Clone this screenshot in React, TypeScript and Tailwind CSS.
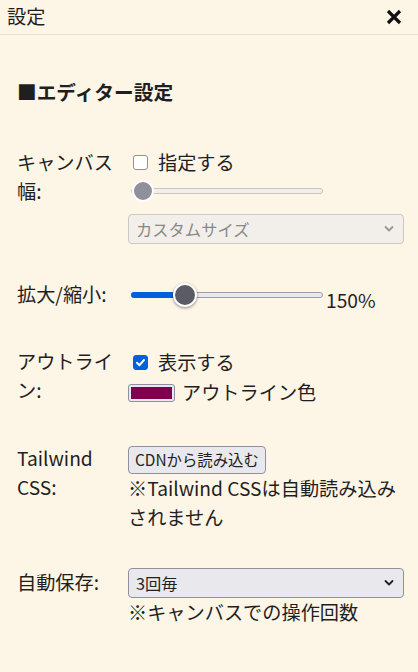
import React, { useState } from "react";

const Chevron = ({ color }: { color: string }) => (
  <svg
    width="10"
    height="7"
    viewBox="0 0 10 7"
    className="pointer-events-none absolute right-[10px] top-1/2 -translate-y-1/2"
  >
    <path d="M1.5 1.5 L5 5 L8.5 1.5" fill="none" stroke={color} strokeWidth="1.8" strokeLinecap="round" strokeLinejoin="round" />
  </svg>
);

const Slider = ({ pct, disabled }: { pct: number; disabled?: boolean }) => (
  <div className="relative flex h-[24px] w-[192px] items-center">
    <div
      className={`h-[6px] w-full rounded-full border ${disabled ? "border-[#c9c5c0] bg-[#f2efea]" : "border-[#9f9fab] bg-[#e9e9ed]"}`}
    />
    {!disabled && (
      <div className="absolute left-0 top-1/2 h-[6px] -translate-y-1/2 rounded-full bg-[#0060df]" style={{ width: `${pct}%` }} />
    )}
    <div
      className={`absolute top-1/2 -translate-y-1/2 rounded-full border-2 border-white ${disabled ? "h-[22px] w-[22px] bg-[#908f9c]" : "h-[24px] w-[24px] bg-[#5b5b66] shadow-[0_1px_3px_rgba(0,0,0,0.45)]"}`}
      style={{ left: disabled ? "1px" : `calc(${pct}% - 12px)` }}
    />
  </div>
);

const Checkbox = ({ checked, onChange }: { checked: boolean; onChange: () => void }) => (
  <button
    onClick={onChange}
    className={`ml-[5px] flex h-[15px] w-[15px] items-center justify-center rounded-[3px] border ${checked ? "border-[#0060df] bg-[#0060df]" : "border-[#8f8f9d] bg-white"}`}
  >
    {checked && (
      <svg width="11" height="11" viewBox="0 0 11 11">
        <path d="M2 5.8 L4.5 8.2 L9 3" fill="none" stroke="white" strokeWidth="2" strokeLinecap="round" strokeLinejoin="round" />
      </svg>
    )}
  </button>
);

const Row = ({ label, className, children }: { label: React.ReactNode; className?: string; children: React.ReactNode }) => (
  <div className={`flex ${className ?? ""}`}>
    <div className="w-[111px] shrink-0 leading-[29px]">{label}</div>
    <div className="min-w-0 flex-1">{children}</div>
  </div>
);

export default function App() {
  const [canvasSize, setCanvasSize] = useState(false);
  const [outline, setOutline] = useState(true);

  return (
    <div className="h-[672px] w-[418px] overflow-hidden bg-[#fdf5e6] font-['Noto_Sans_CJK_JP','Noto_Sans',sans-serif] text-[19.2px] text-[#1f1f1f]">
      <div className="flex h-[35px] items-center justify-between border-b border-[#e8dfcf] pl-[7px] pr-[16px]">
        <span className="leading-none">設定</span>
        <svg width="16" height="16" viewBox="0 0 16 16">
          <path d="M2 2 L14 14 M14 2 L2 14" stroke="#111" strokeWidth="3.2" />
        </svg>
      </div>

      <div className="pl-[17px] pr-[14px]">
        <h2 className="mt-[42px] text-[19.7px] font-bold leading-[30px]">■エディター設定</h2>

        <Row label={<>キャンバス<br />幅:</>} className="mt-[41px]">
          <div className="flex h-[29px] items-center">
            <Checkbox checked={canvasSize} onChange={() => setCanvasSize(!canvasSize)} />
            <span className="ml-[10px]">指定する</span>
          </div>
          <div className="flex h-[28px] items-center pl-[3px]">
            <Slider pct={0} disabled />
          </div>
          <div className="relative mt-[9px]">
            <select
              disabled
              className="h-[30px] w-full appearance-none rounded-[4px] border border-[#ccc8c2] bg-[#f2efea] pl-[7px] text-[16.3px] text-[#8a8886]"
            >
              <option>カスタムサイズ</option>
            </select>
            <Chevron color="#9a9894" />
          </div>
        </Row>

        <Row label="拡大/縮小:" className="mt-[36px]">
          <div className="flex items-start">
            <div className="flex h-[29px] items-center pl-[3px]">
              <Slider pct={28} />
            </div>
            <span className="ml-[3px] mt-[10px] leading-[20px]">150%</span>
          </div>
        </Row>

        <Row label={<>アウトライ<br />ン:</>} className="mt-[37px]">
          <div className="flex h-[30px] items-center">
            <Checkbox checked={outline} onChange={() => setOutline(!outline)} />
            <span className="ml-[10px]">表示する</span>
          </div>
          <div className="flex h-[31px] items-center">
            <div className="h-[18px] w-[47px] rounded-[3px] border border-[#8f8f9d] bg-[#e9e9ed] p-[2px]">
              <div className="h-full w-full bg-[#800050]" />
            </div>
            <span className="ml-[7px]">アウトライン色</span>
          </div>
        </Row>

        <Row label={<>Tailwind<br />CSS:</>} className="mt-[36px]">
          <button className="h-[28px] rounded-[4px] border border-[#8f8f9d] bg-[#e9e9ed] px-[6px] text-[15.4px]">
            CDNから読み込む
          </button>
          <p className="leading-[29px]">※Tailwind CSSは自動読み込み<br />されません</p>
        </Row>

        <Row label="自動保存:" className="mt-[36px]">
          <div className="relative">
            <select className="h-[30px] w-full appearance-none rounded-[4px] border border-[#8f8f9d] bg-[#e9e9ed] pl-[7px] text-[16.3px] text-[#1f1f1f]">
              <option>3回毎</option>
              <option>5回毎</option>
              <option>10回毎</option>
            </select>
            <Chevron color="#222" />
          </div>
          <p className="leading-[29px]">※キャンバスでの操作回数</p>
        </Row>
      </div>
    </div>
  );
}
